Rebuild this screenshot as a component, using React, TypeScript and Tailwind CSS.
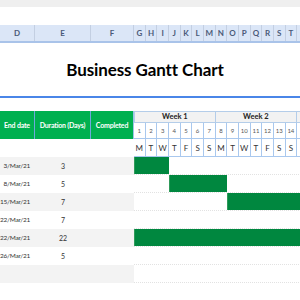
import React from "react";

const cols = "grid grid-cols-[35px_56px_43px_repeat(15,11.667px)]";

const sheetCols = ["D", "E", "F", "G", "H", "I", "J", "K", "L", "M", "N", "O", "P", "Q", "R", "S", "T", ""];
const dayLetters = ["M", "T", "W", "T", "F", "S", "S", "M", "T", "W", "T", "F", "S", "S", ""];

const tasks = [
  { end: "3/Mar/21", days: "3", start: 1, len: 3 },
  { end: "8/Mar/21", days: "5", start: 4, len: 5 },
  { end: "15/Mar/21", days: "7", start: 9, len: 7 },
  { end: "22/Mar/21", days: "7", start: 16, len: 7 },
  { end: "22/Mar/21", days: "22", start: 1, len: 22 },
  { end: "26/Mar/21", days: "5", start: 22, len: 5 },
  { end: "", days: "", start: 0, len: 0 },
];

export default function App() {
  return (
    <div className="w-[300px] h-[300px] overflow-hidden bg-white font-['Lato','Liberation_Sans',sans-serif]">
      <div className="h-[7px] bg-[#efefef]" />
      <div className="h-[18px]" />

      {/* spreadsheet column letters */}
      <div className="grid grid-cols-[35px_56px_43px_repeat(15,11.667px)] h-[18px] bg-[#dbe6f7] border-b-2 border-[#a9c3e9] w-[320px]">
        {sheetCols.map((c, i) => (
          <div
            key={i}
            className="flex items-center justify-center text-[8px] font-bold text-[#4a5a78] border-r border-[#c3cfe2]"
          >
            {c}
          </div>
        ))}
      </div>

      <div className="h-[53px] flex items-center justify-center pr-[10px]">
        <h1 className="text-[17px] font-bold text-black tracking-[-0.1px] pt-[1px]">Business Gantt Chart</h1>
      </div>
      <div className="h-[2px] bg-[#4a86e8]" />
      <div className="h-[13px]" />

      {/* table header */}
      <div className={cols + " grid-rows-[12px_16px_18px] w-[320px]"}>
        <div className="row-span-2 bg-[#00b050] border-r border-[#6fa8dc] flex items-center justify-center whitespace-nowrap text-white text-[7px] font-bold tracking-[-0.2px]">
          End date
        </div>
        <div className="row-span-2 bg-[#00b050] border-r border-[#6fa8dc] flex items-center justify-center whitespace-nowrap text-white text-[7px] font-bold tracking-[-0.2px]">
          Duration (Days)
        </div>
        <div className="row-span-2 bg-[#00b050] border-r border-[#9fc5e8] flex items-center justify-center whitespace-nowrap text-white text-[7px] font-bold tracking-[-0.2px]">
          Completed
        </div>
        <div className="col-span-7 bg-[#f2f2f2] border border-[#b4cde9] flex items-center justify-center text-[7.5px] font-bold text-[#222]">
          Week 1
        </div>
        <div className="col-span-7 bg-[#f2f2f2] border border-l-0 border-[#b4cde9] flex items-center justify-center text-[7.5px] font-bold text-[#222]">
          Week 2
        </div>
        <div className="col-span-1 bg-[#f2f2f2] border border-l-0 border-[#b4cde9]" />
        {dayLetters.map((d, i) => (
          <div
            key={"n" + i}
            className="border-r border-b border-[#a9c8ee] flex items-center justify-center text-[6px] text-[#555]"
          >
            {d ? i + 1 : ""}
          </div>
        ))}
        <div className="col-span-3" />
        {dayLetters.map((d, i) => (
          <div
            key={"d" + i}
            className="border-r border-b border-[#a9c8ee] flex items-center justify-center text-[8px] text-[#333]"
          >
            {d}
          </div>
        ))}
      </div>

      {/* task rows */}
      {tasks.map((t, r) => {
        const gray = r % 2 === 0;
        const from = Math.max(t.start, 1);
        const to = Math.min(t.start + t.len - 1, 15);
        return (
          <div key={r} className={cols + " h-[18px] w-[320px]"}>
            <div className={"flex items-center justify-end pr-[5px] whitespace-nowrap text-[6.5px] tracking-[-0.25px] text-[#333] " + (gray ? "bg-[#f3f3f3]" : "")}>
              {t.end}
            </div>
            <div className={"flex items-center justify-center text-[7px] text-[#333] " + (gray ? "bg-[#f3f3f3]" : "")}>
              {t.days}
            </div>
            <div className={gray ? "bg-[#f3f3f3]" : ""} />
            <div className="col-span-15 grid grid-cols-[repeat(15,11.667px)] border-b border-dotted border-[#e2e2e2]">
              {t.len > 0 && to >= from && (
                <div
                  className="bg-[#00873f] h-[17px] border-l border-[#2f9a5a]"
                  style={{ gridColumn: `${from} / span ${to - from + 1}` }}
                />
              )}
            </div>
          </div>
        );
      })}
    </div>
  );
}
